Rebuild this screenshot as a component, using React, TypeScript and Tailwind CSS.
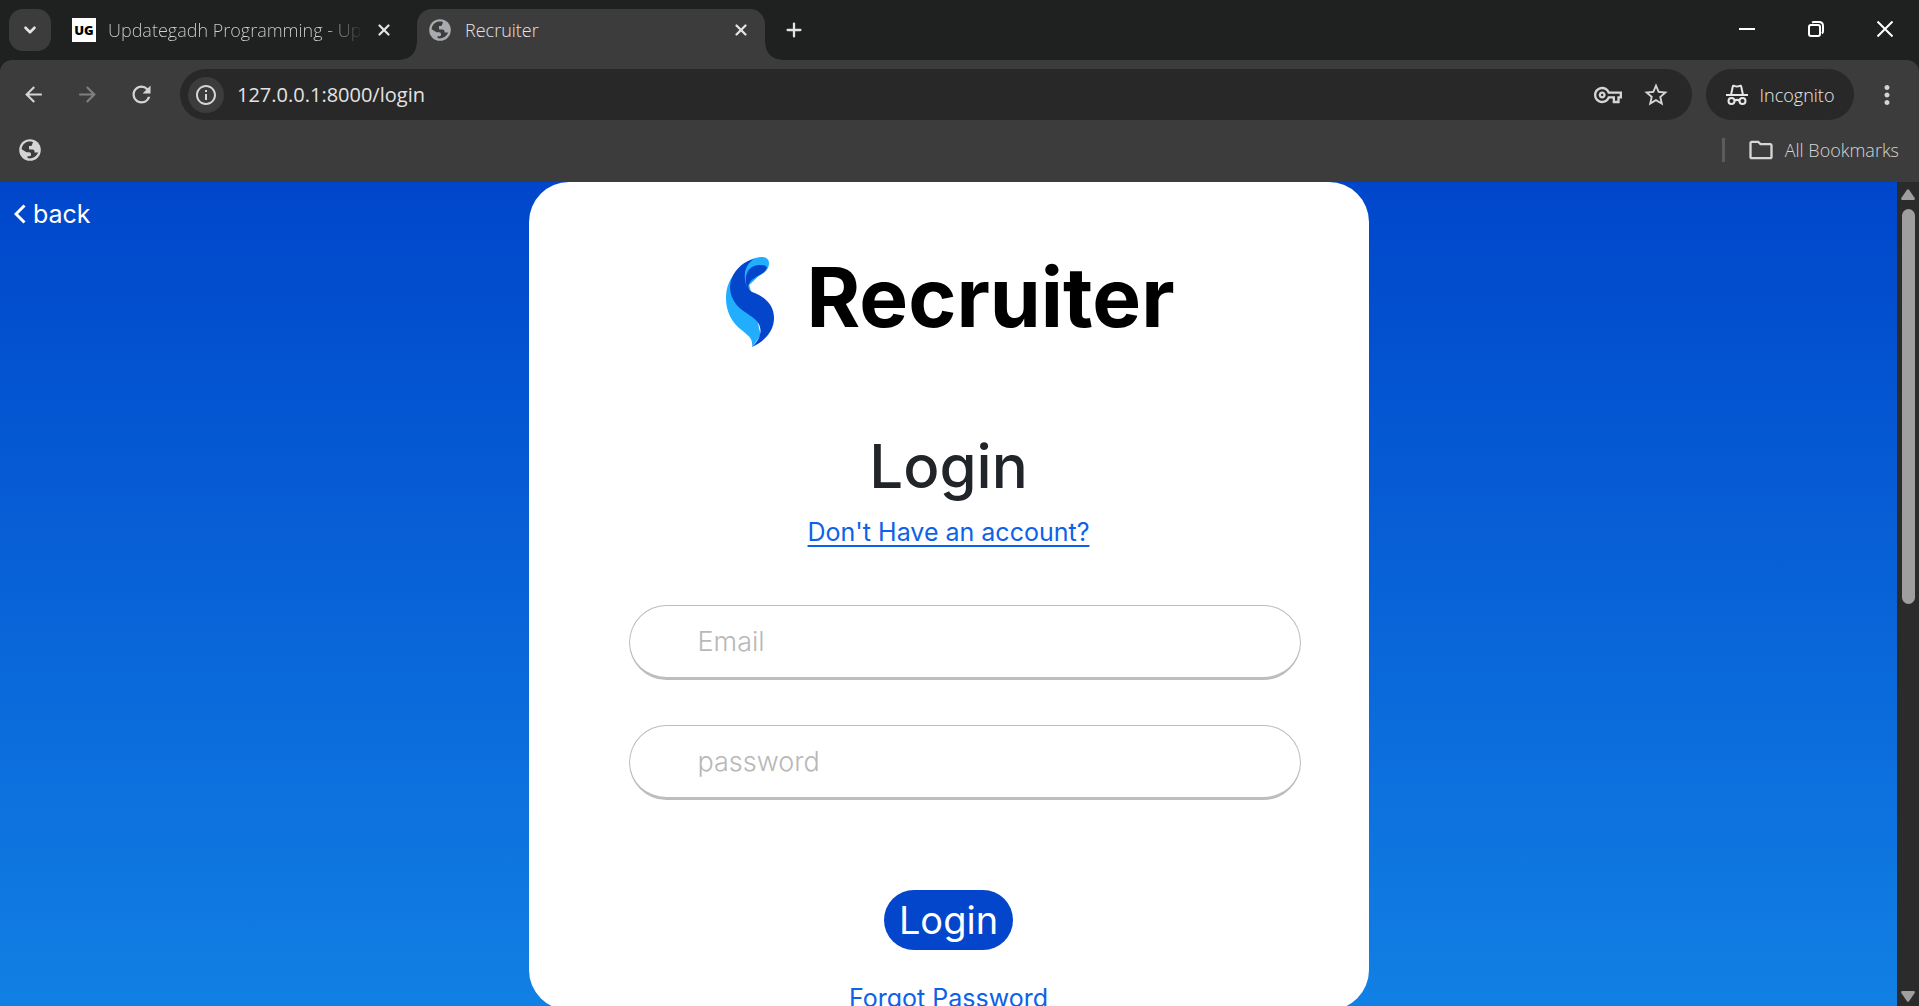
import type { ReactNode } from 'react';
import {
  MdArrowBack,
  MdArrowForward,
  MdInfoOutline,
  MdMoreVert,
  MdOutlineFolder,
  MdOutlineVpnKey,
  MdRefresh,
  MdStarOutline,
} from 'react-icons/md';
import { ChevronDown, Plus, X } from 'lucide-react';

function Globe({ className }: { className: string }) {
  return (
    <svg viewBox="0 0 22 22" className={className} aria-hidden="true">
      <circle cx="11" cy="11" r="10.8" fill="currentColor" />
      <path
        className="fill-[#3c3c3c]"
        d="M9.500 2.600c1.500-.2 3-.1 4.500.4l-1 3c-.2.600-.6 1-1.200 1H10v2.500c0 .5.400 1 1 1h2.500c1.200 0 2 .8 2 2v1h3.700c-1.200 3-3.700 5.300-7 5.800-1.300.2-2.500.1-3.700-.2v-1.900h2.300c.7 0 1.200-.5 1.200-1.200v-1c0-.9-.8-1.700-1.700-1.700H7.500L2.600 10.200C3 6.300 5.700 3.300 9.500 2.600z"
      />
    </svg>
  );
}

function Incognito() {
  return (
    <svg viewBox="0 0 22 22" className="size-[22px]" fill="none" stroke="currentColor" strokeWidth="2" aria-hidden="true">
      <path d="M0 11h22" />
      <path d="M5 11 6.800 2.500c.2-.8 1-1 1.600-.7 1.700.8 3.500.8 5.200 0 .7-.3 1.400 0 1.600.7L17 11" />
      <circle cx="5.500" cy="17" r="3" />
      <circle cx="16.500" cy="17" r="3" />
      <path d="M8.500 16.700c1.500-1 3.500-1 5 0" />
    </svg>
  );
}

function LogoMark() {
  return (
    <svg viewBox="0 0 144 270" className="h-[90px] w-12" aria-hidden="true">
      <path
        fill="#22aeff"
        d="M104 0c18-1 26 8 25 21-1 16-12 27-30 35L70 84l34 150c-8 13-15 22-26 36 2-16-2-26-14-36-10-10-24-18-36-32C10 180 0 154 0 124 0 92 10 66 32 42 54 16 78 2 104 0z"
      />
      <path
        fill="#0345cb"
        d="M84 6C62 20 52 44 58 74c3 18 12 28 30 35 34 14 56 40 56 74 0 36-24 68-66 87 24-22 32-48 20-70-14-24-42-30-64-54C14 124 6 92 18 62 30 34 56 12 84 6z"
      />
      <path fill="#0345cb" d="M60 78c-4-32 12-52 38-54 14-1 24 3 25 8-5 12-14 18-26 24-16 8-30 20-30 32 0 6 2 10 5 15-8-6-11-14-12-25z" />
    </svg>
  );
}

function IconButton({ label, className, children }: { label: string; className: string; children: ReactNode }) {
  return (
    <button type="button" aria-label={label} className={`flex shrink-0 items-center justify-center ${className}`}>
      {children}
    </button>
  );
}

function TabStrip() {
  return (
    <div className="flex h-[60px] bg-[#1f2120] pl-[9px] pt-[9px] text-[#e3e3e3]">
      <IconButton label="Search tabs" className="size-[42px] rounded-[14px] bg-[#3c3c3c]">
        <ChevronDown size={18} strokeWidth={3.5} />
      </IconButton>

      <div className="ml-[21px] flex h-[42px] w-[329px] items-center">
        <span className="flex size-6 shrink-0 items-center justify-center bg-white text-[13px] font-black text-black">UG</span>
        <span className="ml-3 w-64 whitespace-nowrap bg-linear-to-r from-[#d0d0d0] from-85% to-transparent to-100% bg-clip-text font-light text-transparent">
          Updategadh Programming - Up
        </span>
        <IconButton label="Close Updategadh tab" className="ml-2 size-6">
          <X size={18} strokeWidth={3} />
        </IconButton>
      </div>

      <div className="relative ml-4 flex w-[348px] items-start rounded-t-[15px] bg-[#3c3c3c]">
        <span className="absolute -left-4 bottom-0 size-4 bg-[radial-gradient(circle_at_top_left,#1f2120_15px,#3c3c3c_16px)]" />
        <span className="absolute -right-4 bottom-0 size-4 bg-[radial-gradient(circle_at_top_right,#1f2120_15px,#3c3c3c_16px)]" />
        <div className="flex h-[42px] w-full items-center px-3">
          <Globe className="size-[22px] text-[#a8abb0]" />
          <span className="ml-[14px] flex-1 font-light">Recruiter</span>
          <IconButton label="Close Recruiter tab" className="size-6">
            <X size={18} strokeWidth={3} />
          </IconButton>
        </div>
      </div>
      <IconButton label="New tab" className="ml-2 size-[42px]">
        <Plus size={22} strokeWidth={2.5} />
      </IconButton>

      <div className="-mt-2 ml-auto flex h-14 text-white">
        <IconButton label="Minimize" className="w-[69px]">
          <svg viewBox="0 0 16 16" className="size-4" stroke="currentColor" strokeWidth="2">
            <path d="M0 8h16" />
          </svg>
        </IconButton>
        <IconButton label="Restore" className="w-[69px]">
          <svg viewBox="0 0 16 16" className="size-4" fill="none" stroke="currentColor" strokeWidth="2">
            <rect x="1" y="4" width="11" height="11" rx="2" />
            <path d="M4 1.500C5 1 5.500 1 6 1h5c2.500 0 4 1.500 4 4v5c0 1 0 1.500-1 2.500" />
          </svg>
        </IconButton>
        <IconButton label="Close window" className="w-[69px]">
          <svg viewBox="0 0 16 16" className="size-4" stroke="currentColor" strokeWidth="2">
            <path d="m.5.500 15 15m0-15-15 15" />
          </svg>
        </IconButton>
      </div>
    </div>
  );
}

function Toolbar() {
  return (
    <div className="bg-[#1f2120]">
      <div className="rounded-t-xl bg-[#3c3c3c] pt-[9px] text-[#d5d5d5]">
        <div className="flex h-[51px] items-center pl-[6px]">
          <IconButton label="Back" className="w-[54px]">
            <MdArrowBack size={25} />
          </IconButton>
          <IconButton label="Forward" className="w-[54px] text-[#808080]">
            <MdArrowForward size={25} />
          </IconButton>
          <IconButton label="Reload" className="w-[54px]">
            <MdRefresh size={27} />
          </IconButton>
          <div className="ml-3 flex h-full flex-1 items-center rounded-full bg-[#282828] pl-2 pr-[22px]">
            <IconButton label="Site information" className="size-9 rounded-full bg-[#3c3c3c]">
              <MdInfoOutline size={24} />
            </IconButton>
            <input
              type="text"
              aria-label="Address"
              defaultValue="127.0.0.1:8000/login"
              className="ml-[13px] min-w-0 flex-1 bg-transparent text-xl text-[#e3e3e3] outline-none"
            />
            <IconButton label="Passwords" className="size-7">
              <MdOutlineVpnKey size={28} />
            </IconButton>
            <IconButton label="Bookmark this page" className="ml-5 size-7">
              <MdStarOutline size={28} />
            </IconButton>
          </div>
          <button type="button" className="ml-[14px] flex h-full w-[148px] items-center justify-center gap-3 rounded-full bg-[#282828] font-light text-[#e8e8e8]">
            <Incognito />
            Incognito
          </button>
          <IconButton label="Menu" className="w-[65px]">
            <MdMoreVert size={30} />
          </IconButton>
        </div>
        <div className="flex h-[62px] items-center pb-[2px] pl-[19px] pr-5">
          <Globe className="size-[22px]" />
          <span className="ml-auto h-6 w-[3px] bg-[#5c5c5c]" />
          <button type="button" className="ml-[22px] flex items-center gap-[10px] font-light">
            <MdOutlineFolder size={28} />
            All Bookmarks
          </button>
        </div>
      </div>
    </div>
  );
}

function Field({ label, type }: { label: string; type: string }) {
  return (
    <input
      type={type}
      aria-label={label}
      placeholder={label}
      className="block h-[75px] w-full rounded-full border border-b-3 border-[#bdbdbd] bg-white px-[68px] text-[27px] font-light outline-none placeholder:text-[#b8b8b8]"
    />
  );
}

function LoginCard() {
  return (
    <main className="mx-auto h-[828px] w-[840px] shrink-0 rounded-[40px] bg-white">
      <form className="flex flex-col items-center" onSubmit={(e) => e.preventDefault()}>
        <div className="mt-[74px] flex h-[92px] items-center gap-8 pl-1">
          <LogoMark />
          <span className="pb-2 text-[82px] font-bold leading-none text-black">Recruiter</span>
        </div>
        <h1 className="mt-[82px] text-[60px] font-medium leading-[72px] text-[#212529]">Login</h1>
        <a href="#register" className="mt-3 text-[25px] leading-9 text-[#0d62e8] underline decoration-2 underline-offset-4">
          Don't Have an account?
        </a>
        <div className="mt-[55px] flex w-full flex-col gap-[45px] pl-[100px] pr-[68px]">
          <Field label="Email" type="email" />
          <Field label="password" type="password" />
        </div>
        <button type="submit" className="mt-[90px] h-[60px] w-[129px] rounded-[30px] bg-[#0345cb] text-[38px] leading-none text-white">
          Login
        </button>
        <a href="#forgot" className="mt-[30px] text-[25px] leading-9 text-[#0d62e8]">Forgot Password</a>
      </form>
    </main>
  );
}

function Scrollbar() {
  return (
    <div className="flex w-[22px] shrink-0 flex-col items-center bg-[#2b2b2b] pb-1 pt-[7px] text-[#9f9f9f]" aria-hidden="true">
      <svg viewBox="0 0 14 11" className="h-[11px] w-[14px]" fill="currentColor">
        <path d="M6 .800q1-1.300 2 0l5.700 8.200q.6 2-1 2H1.300q-1.600 0-1-2z" />
      </svg>
      <span className="mt-[9px] h-[395px] w-[13px] rounded-full bg-[#9f9f9f]" />
      <svg viewBox="0 0 14 11" className="mt-auto h-[11px] w-[14px] rotate-180" fill="currentColor">
        <path d="M6 .800q1-1.300 2 0l5.700 8.200q.6 2-1 2H1.300q-1.600 0-1-2z" />
      </svg>
    </div>
  );
}

export default function App() {
  return (
    <div className="flex h-screen flex-col overflow-hidden font-['Open_Sans',sans-serif] text-lg">
      <header className="shrink-0">
        <TabStrip />
        <Toolbar />
      </header>
      <div className="flex min-h-0 flex-1">
        <div className="relative flex min-w-0 flex-1 overflow-hidden bg-linear-to-b/srgb from-[#0046cb] to-[#1180e4] font-['Inter',sans-serif]">
          <a href="#back" className="absolute left-[14px] top-4 flex items-center gap-[7px] text-[25px] leading-8 text-white">
            <svg viewBox="0 0 12 20" className="h-5 w-3" fill="none" stroke="currentColor" strokeWidth="3">
              <path d="M10.500 1.500 2 10l8.500 8.500" />
            </svg>
            back
          </a>
          <LoginCard />
        </div>
        <Scrollbar />
      </div>
    </div>
  );
}
